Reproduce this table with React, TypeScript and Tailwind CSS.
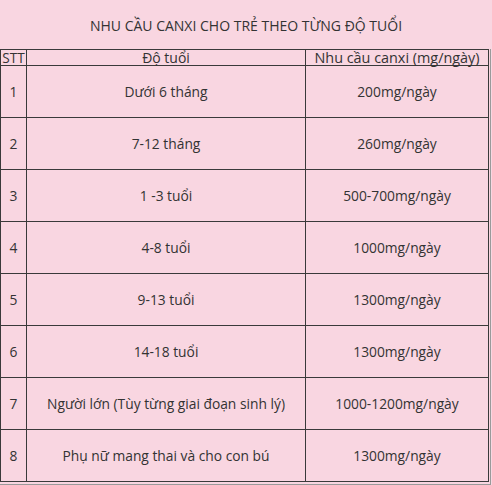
import React from "react";

const rows: [string, string, string][] = [
  ["1", "Dưới 6 tháng", "200mg/ngày"],
  ["2", "7-12 tháng", "260mg/ngày"],
  ["3", "1 -3 tuổi", "500-700mg/ngày"],
  ["4", "4-8 tuổi", "1000mg/ngày"],
  ["5", "9-13 tuổi", "1300mg/ngày"],
  ["6", "14-18 tuổi", "1300mg/ngày"],
  ["7", "Người lớn (Tùy từng giai đoạn sinh lý)", "1000-1200mg/ngày"],
  ["8", "Phụ nữ mang thai và cho con bú", "1300mg/ngày"],
];

export default function App() {
  return (
    <div
      className="w-[492px] h-[485px] bg-[#f9d6e1] text-[#333] overflow-hidden"
      style={{ fontFamily: '"Open Sans", "Noto Sans", sans-serif' }}
    >
      <div className="h-[49px] flex items-center justify-center text-[14px] pt-[1px]">
        NHU CẦU CANXI CHO TRẺ THEO TỪNG ĐỘ TUỔI
      </div>
      <div className="w-[491px] border-r border-b border-[#9a9a9a] pr-[1px] pb-[2px]">
        <table className="w-[489px] border-collapse text-[13.8px] table-fixed">
          <colgroup>
            <col className="w-[26px]" />
            <col className="w-[279px]" />
            <col />
          </colgroup>
          <thead>
            <tr className="h-[16px]">
              <th className="border border-[#3a3a3a] font-normal leading-[14px] p-0 text-[13.6px]">STT</th>
              <th className="border border-[#3a3a3a] font-normal leading-[14px] p-0 text-[14px]">Độ tuổi</th>
              <th className="border border-[#3a3a3a] font-normal leading-[14px] p-0 text-[14.4px]">Nhu cầu canxi (mg/ngày)</th>
            </tr>
          </thead>
          <tbody>
            {rows.map(([n, age, amt]) => (
              <tr key={n} className="h-[52px]">
                <td className="border border-[#3a3a3a] text-center p-0 pt-[1px]">{n}</td>
                <td className="border border-[#3a3a3a] text-center p-0 pt-[1px]">{age}</td>
                <td className="border border-[#3a3a3a] text-center p-0 pt-[1px]">{amt}</td>
              </tr>
            ))}
          </tbody>
        </table>
      </div>
    </div>
  );
}
